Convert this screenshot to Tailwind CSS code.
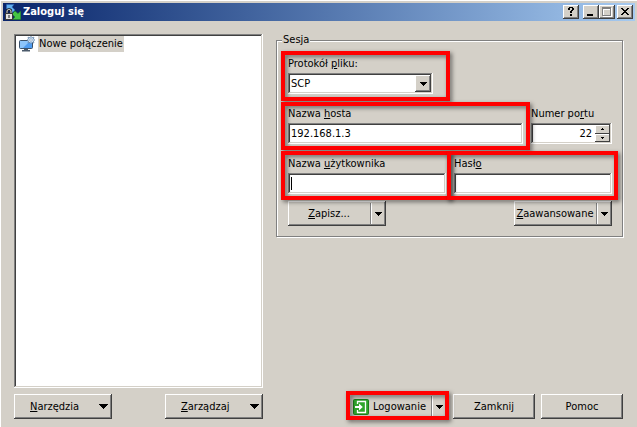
<!DOCTYPE html>
<html lang="pl">
<head>
  <meta charset="UTF-8" />
  <meta name="viewport" content="width=device-width, initial-scale=1.0"/>
  <title>Zaloguj się</title>
  <script src="https://cdn.jsdelivr.net/npm/@tailwindcss/browser@4"></script>
</head>
<body class="bg-[#d4d0c8] font-['DejaVu_Sans_Condensed','DejaVu_Sans',sans-serif] text-[11px] leading-[14px] text-black">
  <div class="min-h-screen flex flex-col border-t border-l border-white">

    <header class="mt-0.5 ml-0.5 mr-0.5 h-[18px] pl-0.5 pr-0.5 flex items-center bg-linear-to-r from-[#0a246a] to-[#a6caf0]">
      <svg class="w-4 h-4 shrink-0" viewBox="0 0 16 16" aria-hidden="true">
        <path d="M1.500 .5h7.500L7 3l3 3-3 3-3-3-2.500 2z" fill="#62aef0" stroke="#2b66b4" stroke-width=".5"/>
        <path d="M15.700 7v8.500H7.500L10 13 7 10l3-3 3 2.500z" fill="#45c445" stroke="#1a7d1a" stroke-width=".5"/>
        <path d="M2 9.500V7.500a2 2 0 0 1 4 0v2" fill="none" stroke="#111" stroke-width="2.400"/>
        <path d="M2 9.500V7.500a2 2 0 0 1 4 0v2" fill="none" stroke="#c8c8c8" stroke-width="1.200"/>
        <rect x=".5" y="9.500" width="7" height="6" fill="#e4e4e4" stroke="#3a3a3a"/>
        <path d="M3.500 11h1v3h-1z" fill="#222"/>
      </svg>
      <h1 class="ml-[2px] flex-1 font-bold text-white">Zaloguj się</h1>
      <button aria-label="Pomoc" class="w-4 h-3.5 grid place-items-center bg-[#d4d0c8] shadow-[inset_-1px_-1px_#404040,inset_1px_1px_#fff,inset_-2px_-2px_#808080]">
        <svg class="w-4 h-3.5" viewBox="0 0 16 14" shape-rendering="crispEdges"><path d="M5 3h1V2h4v1h1v2h-1v1H9v2H7V6h1V5h1V3H7v2H5zM7 9h2v2H7z"/></svg>
      </button>
      <button aria-label="Minimalizuj" class="ml-1 w-4 h-3.5 bg-[#d4d0c8] shadow-[inset_-1px_-1px_#404040,inset_1px_1px_#fff,inset_-2px_-2px_#808080]">
        <svg class="w-4 h-3.5" viewBox="0 0 16 14" shape-rendering="crispEdges"><path d="M4 9h6v2H4z"/></svg>
      </button>
      <button aria-label="Maksymalizuj" disabled class="w-4 h-3.5 bg-[#d4d0c8] shadow-[inset_-1px_-1px_#404040,inset_1px_1px_#fff,inset_-2px_-2px_#808080]">
        <svg class="w-4 h-3.5" viewBox="0 0 16 14" shape-rendering="crispEdges"><path d="M4 3h9v9H4zM5 5v6h7V5z" fill="#fff" fill-rule="evenodd"/><path d="M3 2h9v9H3zM4 4v6h7V4z" fill="#808080" fill-rule="evenodd"/></svg>
      </button>
      <button aria-label="Zamknij okno" class="ml-0.5 w-4 h-3.5 bg-[#d4d0c8] shadow-[inset_-1px_-1px_#404040,inset_1px_1px_#fff,inset_-2px_-2px_#808080]">
        <svg class="w-4 h-3.5" viewBox="0 0 16 14" shape-rendering="crispEdges"><path d="M4 3h2v1h1v1h2V4h1V3h2v1h-1v1h-1v1H9v1h1v1h1v1h1v1h-2V9H9V8H7v1H6v1H4V9h1V8h1V7h1V6H6V5H5V4H4z"/></svg>
      </button>
    </header>

    <main class="flex-1 flex gap-[13px] pt-[13px] pl-[13px] pr-3.5 pb-2">

      <section class="w-[249px] shrink-0 flex flex-col gap-1.5">
        <ul class="flex-1 bg-white p-0.5 pl-[5px] shadow-[inset_-1px_-1px_#fff,inset_1px_1px_#808080,inset_-2px_-2px_#d4d0c8,inset_2px_2px_#404040]">
          <li class="flex items-center gap-[3px]">
            <svg class="w-4 h-4" viewBox="0 0 16 16" aria-hidden="true">
              <rect x=".5" y="4.500" width="13" height="8" rx="1" fill="#4f9cf0" stroke="#3b5068"/>
              <path d="M1 5h10L4 12H1z" fill="#8cc4fa"/>
              <path d="M5 13h4v1h2v1.500H3V14h2z" fill="#4b5a6b"/>
              <path d="M12 .3l1 1.500 1.900-.6-.5 1.800 1.400 1-1.400 1 .5 2-1.900-.7L12 7.700l-1-1.400L9 7l.5-2L8.200 4l1.300-1L9 1.200l2 .6z" fill="#d3e4f5" stroke="#6486ab" stroke-width=".8"/>
              <circle cx="12" cy="4" r="1.300" fill="#fff" stroke="#6486ab" stroke-width=".6"/>
            </svg>
            <span class="h-4 px-px leading-4 bg-[#d4d0c8]">Nowe połączenie</span>
          </li>
        </ul>
        <div class="flex justify-between">
          <button class="w-[98px] h-[25px] pl-4 pr-1 flex items-center justify-between shadow-[inset_-1px_-1px_#404040,inset_1px_1px_#fff,inset_-2px_-2px_#808080]">
            <span><u>N</u>arzędzia</span>
            <svg class="w-[9px] h-[5px]" viewBox="0 0 9 5" shape-rendering="crispEdges"><path d="M0 0h9v1H8v1H7v1H6v1H5v1H4V4H3V3H2V2H1V1H0z"/></svg>
          </button>
          <button class="w-[98px] h-[25px] pl-4 pr-1 flex items-center justify-between shadow-[inset_-1px_-1px_#404040,inset_1px_1px_#fff,inset_-2px_-2px_#808080]">
            <span><u>Z</u>arządzaj</span>
            <svg class="w-[9px] h-[5px]" viewBox="0 0 9 5" shape-rendering="crispEdges"><path d="M0 0h9v1H8v1H7v1H6v1H5v1H4V4H3V3H2V2H1V1H0z"/></svg>
          </button>
        </div>
      </section>

      <form class="flex-1 flex flex-col justify-between" onsubmit="return false">
        <fieldset class="border border-[#808080] shadow-[1px_1px_#fff,inset_1px_1px_#fff] pl-[11px] pr-2.5 pb-2.5">
          <legend class="-ml-1.5 px-px leading-3 bg-[#d4d0c8]">Sesja</legend>

          <div class="mt-[11px] relative w-[145px] flex flex-col gap-0.5">
            <label for="protocol">Protokół <u>p</u>liku:</label>
            <div class="relative h-[21px]">
              <select id="protocol" class="block w-full h-full appearance-none bg-white pl-[3px] shadow-[inset_-1px_-1px_#fff,inset_1px_1px_#808080,inset_-2px_-2px_#d4d0c8,inset_2px_2px_#404040]">
                <option>SCP</option>
                <option>SFTP</option>
                <option>FTP</option>
              </select>
              <span class="pointer-events-none absolute right-0.5 inset-y-0.5 w-4 grid place-items-center bg-[#d4d0c8] shadow-[inset_-1px_-1px_#404040,inset_1px_1px_#fff,inset_-2px_-2px_#808080]">
                <svg class="w-[7px] h-1" viewBox="0 0 7 4" shape-rendering="crispEdges"><path d="M0 0h7v1H6v1H5v1H4v1H3V3H2V2H1V1H0z"/></svg>
              </span>
            </div>
            <span class="pointer-events-none absolute z-10 -left-[7px] -top-1.5 -right-[17px] -bottom-[7px] border-4 border-[#f00] drop-shadow-[2px_2px_2px_rgba(0,0,0,0.5)]"></span>
          </div>

          <div class="mt-[13px] flex gap-2">
            <div class="relative flex-1 flex flex-col gap-0.5">
              <label for="host">Nazwa <u>h</u>osta</label>
              <input id="host" type="text" value="192.168.1.3" class="w-full h-[21px] bg-white px-[3px] outline-none shadow-[inset_-1px_-1px_#fff,inset_1px_1px_#808080,inset_-2px_-2px_#d4d0c8,inset_2px_2px_#404040]" />
              <span class="pointer-events-none absolute z-10 -left-[7px] -top-[5px] -right-[7px] -bottom-1.5 border-4 border-[#f00] drop-shadow-[2px_2px_2px_rgba(0,0,0,0.5)]"></span>
            </div>
            <div class="w-[81px] flex flex-col gap-0.5">
              <label for="port" class="whitespace-nowrap">Numer po<u>r</u>tu</label>
              <div class="h-[21px] flex bg-white p-0.5 shadow-[inset_-1px_-1px_#fff,inset_1px_1px_#808080,inset_-2px_-2px_#d4d0c8,inset_2px_2px_#404040]">
                <input id="port" type="text" inputmode="numeric" value="22" class="min-w-0 flex-1 pr-[3px] text-right outline-none" />
                <div class="w-[15px] flex flex-col bg-[#d4d0c8]">
                  <button type="button" aria-label="Zwiększ" class="flex-1 grid place-items-center shadow-[inset_-1px_-1px_#404040,inset_1px_1px_#fff]"><svg class="w-[3px] h-0.5" viewBox="0 0 3 2" shape-rendering="crispEdges"><path d="M1 0h1v1h1v1H0V1h1z"/></svg></button>
                  <button type="button" aria-label="Zmniejsz" class="flex-1 grid place-items-center shadow-[inset_-1px_-1px_#404040,inset_1px_1px_#fff]"><svg class="w-[3px] h-0.5" viewBox="0 0 3 2" shape-rendering="crispEdges"><path d="M0 0h3v1H2v1H1V1H0z"/></svg></button>
                </div>
              </div>
            </div>
          </div>

          <div class="mt-[13px] grid grid-cols-2 gap-2">
            <div class="relative flex flex-col gap-0.5">
              <label for="user">Nazwa <u>u</u>żytkownika</label>
              <input id="user" type="text" class="w-full h-[21px] bg-white px-[3px] outline-none shadow-[inset_-1px_-1px_#fff,inset_1px_1px_#808080,inset_-2px_-2px_#d4d0c8,inset_2px_2px_#404040]" />
              <span class="pointer-events-none absolute left-[3px] bottom-1 w-px h-[13px] bg-black"></span>
              <span class="pointer-events-none absolute z-10 -left-[7px] -top-1.5 -right-[5px] -bottom-1.5 border-4 border-[#f00] drop-shadow-[2px_2px_2px_rgba(0,0,0,0.5)]"></span>
            </div>
            <div class="relative flex flex-col gap-0.5">
              <label for="password">Hasł<u>o</u></label>
              <input id="password" type="password" class="w-full h-[21px] bg-white px-[3px] outline-none shadow-[inset_-1px_-1px_#fff,inset_1px_1px_#808080,inset_-2px_-2px_#d4d0c8,inset_2px_2px_#404040]" />
              <span class="pointer-events-none absolute z-10 -left-[7px] -top-1.5 -right-1.5 -bottom-1.5 border-4 border-[#f00] drop-shadow-[2px_2px_2px_rgba(0,0,0,0.5)]"></span>
            </div>
          </div>

          <div class="mt-[7px] flex justify-between">
            <div class="w-[98px] h-[25px] flex shadow-[inset_-1px_-1px_#404040,inset_1px_1px_#fff,inset_-2px_-2px_#808080]">
              <button type="button" class="my-0.5 flex-1 border-r border-[#808080]"><u>Z</u>apisz...</button>
              <button type="button" aria-label="Opcje zapisu" class="my-0.5 w-[15px] pr-0.5 grid place-items-center border-l border-white"><svg class="w-[7px] h-1" viewBox="0 0 7 4" shape-rendering="crispEdges"><path d="M0 0h7v1H6v1H5v1H4v1H3V3H2V2H1V1H0z"/></svg></button>
            </div>
            <div class="w-[98px] h-[25px] flex shadow-[inset_-1px_-1px_#404040,inset_1px_1px_#fff,inset_-2px_-2px_#808080]">
              <button type="button" class="my-0.5 flex-1 border-r border-[#808080]"><u>Z</u>aawansowane</button>
              <button type="button" aria-label="Opcje zaawansowane" class="my-0.5 w-[15px] pr-0.5 grid place-items-center border-l border-white"><svg class="w-[7px] h-1" viewBox="0 0 7 4" shape-rendering="crispEdges"><path d="M0 0h7v1H6v1H5v1H4v1H3V3H2V2H1V1H0z"/></svg></button>
            </div>
          </div>
        </fieldset>

        <div class="flex justify-end gap-1.5">
          <div class="relative w-[98px] h-[25px] flex shadow-[inset_-1px_-1px_#404040,inset_1px_1px_#fff,inset_-2px_-2px_#808080]">
            <button type="submit" class="my-0.5 flex-1 pl-1 flex items-center gap-1 border-r border-[#808080]">
              <svg class="w-4 h-4 shrink-0" viewBox="0 0 16 16" aria-hidden="true">
                <rect x=".5" y=".5" width="15" height="15" rx="1" fill="#2fa52b" stroke="#1d7d1b"/>
                <path d="M4.500 5V2.500h8v11h-8V11" fill="none" stroke="#fff" stroke-width="1.300"/>
                <path d="M2 7h4V4.500L9.800 8 6 11.500V9H2z" fill="#fff"/>
              </svg>
              Logowanie
            </button>
            <button type="button" aria-label="Opcje logowania" class="my-0.5 w-[15px] pr-0.5 grid place-items-center border-l border-white"><svg class="w-[7px] h-1" viewBox="0 0 7 4" shape-rendering="crispEdges"><path d="M0 0h7v1H6v1H5v1H4v1H3V3H2V2H1V1H0z"/></svg></button>
            <span class="pointer-events-none absolute z-10 -left-[3px] -top-[3px] -right-0.5 -bottom-px border-4 border-[#f00] drop-shadow-[2px_2px_2px_rgba(0,0,0,0.5)]"></span>
          </div>
          <button type="button" class="w-[82px] h-[25px] shadow-[inset_-1px_-1px_#404040,inset_1px_1px_#fff,inset_-2px_-2px_#808080]">Zamknij</button>
          <button type="button" class="w-[82px] h-[25px] shadow-[inset_-1px_-1px_#404040,inset_1px_1px_#fff,inset_-2px_-2px_#808080]">Pomoc</button>
        </div>
      </form>
    </main>
  </div>
</body>
</html>
